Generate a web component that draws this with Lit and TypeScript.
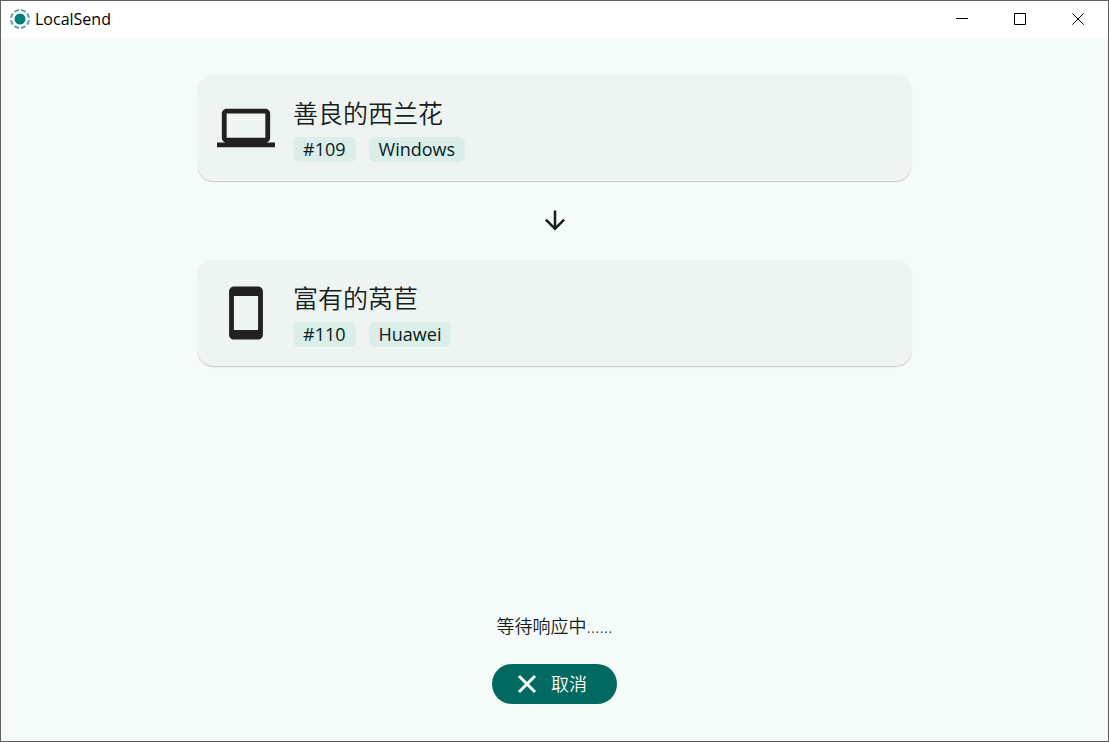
import { LitElement, html, css, svg } from "lit";
import { customElement, property } from "lit/decorators.js";

type DeviceKind = "desktop" | "mobile";

const deviceIcons = {
  desktop: svg`<path d="M20 18c1.1 0 1.99-.9 1.99-2L22 6c0-1.1-.9-2-2-2H4c-1.1 0-2 .9-2 2v10c0 1.1.9 2 2 2H0v2h24v-2h-4zM4 6h16v10H4V6z"/>`,
  mobile: svg`<path d="M17 1.01 7 1c-1.1 0-2 .9-2 2v18c0 1.1.9 2 2 2h10c1.1 0 2-.9 2-2V3c0-1.1-.9-1.99-2-1.99zM17 19H7V5h10v14z"/>`,
};

@customElement("title-bar")
export class TitleBar extends LitElement {
  static styles = css`
    :host {
      display: flex;
      align-items: center;
      justify-content: space-between;
      box-sizing: border-box;
      height: 37px;
      padding: 0 1px 2px 0;
      background: #fff;
      color: #000;
    }
    .brand {
      display: flex;
      align-items: center;
      gap: 5px;
      padding-left: 9px;
      font-size: 16px;
      line-height: 20px;
    }
    .brand svg {
      width: 20px;
      height: 20px;
    }
    .controls {
      display: flex;
      height: 100%;
    }
    button {
      display: grid;
      place-items: center;
      width: 58px;
      height: 100%;
      padding: 0;
      border: 0;
      background: none;
      color: inherit;
    }
    button svg {
      width: 12px;
      height: 12px;
      fill: none;
      stroke: currentColor;
    }
  `;

  render() {
    return html`
      <div class="brand">
        <svg viewBox="0 0 20 20" fill="none" stroke="#5fa5a1" stroke-width="2" aria-hidden="true">
          <circle cx="10" cy="10" r="5.5" fill="#008078" stroke="none" />
          <circle cx="10" cy="10" r="9" pathLength="80" stroke-dasharray="7 3" stroke-dashoffset="-1.5" />
        </svg>
        <span>LocalSend</span>
      </div>
      <div class="controls">
        <button aria-label="最小化">
          <svg viewBox="0 0 12 12"><path d="M0 5.5h12" /></svg>
        </button>
        <button aria-label="最大化">
          <svg viewBox="0 0 12 12"><path d="M.5.5h11v11H.5z" /></svg>
        </button>
        <button aria-label="关闭">
          <svg viewBox="0 0 12 12"><path d="m.3.3 11.4 11.4M11.7.3.3 11.7" /></svg>
        </button>
      </div>
    `;
  }
}

@customElement("device-card")
export class DeviceCard extends LitElement {
  @property() name = "";
  @property() kind: DeviceKind = "desktop";
  @property({ attribute: false }) tags: string[] = [];

  static styles = css`
    :host {
      display: flex;
      align-items: center;
      gap: 18px;
      padding: 19px;
      border-radius: 15px;
      background: #eef4f2;
      box-shadow: 0 1px 1px rgba(0, 0, 0, 0.14), 0 1px 2px rgba(0, 0, 0, 0.08);
    }
    .icon {
      flex: none;
      width: 58px;
      height: 58px;
      fill: #212121;
    }
    .info {
      display: flex;
      flex-direction: column;
      gap: 5px;
      min-width: 0;
    }
    h2 {
      margin: 0;
      font-size: 25px;
      font-weight: 350;
      line-height: 38px;
    }
    ul {
      display: flex;
      flex-wrap: wrap;
      gap: 13px;
      margin: 0;
      padding: 0;
      list-style: none;
    }
    li {
      padding: 0 10px;
      border-radius: 6px;
      background: #dbeee9;
      color: #06201c;
      font-size: 18px;
      line-height: 25px;
    }
  `;

  render() {
    return html`
      <svg class="icon" viewBox="0 0 24 24" aria-hidden="true">${deviceIcons[this.kind]}</svg>
      <div class="info">
        <h2>${this.name}</h2>
        <ul>
          ${this.tags.map((tag) => html`<li>${tag}</li>`)}
        </ul>
      </div>
    `;
  }
}

@customElement("app-root")
export class AppRoot extends LitElement {
  static styles = css`
    :host {
      display: flex;
      flex-direction: column;
      box-sizing: border-box;
      min-height: 100vh;
      border: 1px solid #5f5f5f;
      background: #f5fbf9;
      color: #171d1b;
      font-family: "Open Sans", "Noto Sans CJK SC", sans-serif;
    }
    main {
      flex: 1;
      display: flex;
      flex-direction: column;
      justify-content: space-between;
      box-sizing: border-box;
      width: 100%;
      max-width: 787px;
      margin: 0 auto;
      padding: 37px;
    }
    .devices {
      display: flex;
      flex-direction: column;
      gap: 24px;
    }
    .arrow {
      align-self: center;
      width: 30px;
      height: 31px;
      fill: currentColor;
    }
    .status {
      display: flex;
      flex-direction: column;
      align-items: center;
      gap: 25px;
    }
    p {
      margin: 0;
      font-size: 18px;
      font-weight: 350;
      line-height: 26px;
    }
    .cancel {
      display: flex;
      align-items: center;
      gap: 13px;
      height: 40px;
      padding: 0 30px 0 24px;
      border: 0;
      border-radius: 20px;
      background: #006a60;
      color: #fff;
      font: inherit;
      font-size: 18px;
      font-weight: 350;
    }
    .cancel svg {
      width: 22px;
      height: 22px;
      fill: none;
      stroke: currentColor;
      stroke-width: 3;
    }
    .cancel span {
      padding-bottom: 2px;
    }
  `;

  render() {
    return html`
      <title-bar></title-bar>
      <main>
        <section class="devices">
          <device-card name="善良的西兰花" kind="desktop" .tags=${["#109", "Windows"]}></device-card>
          <svg class="arrow" viewBox="0 0 24 24" aria-hidden="true">
            <path d="m20 12-1.41-1.41L13 16.17V4h-2v12.17l-5.58-5.59L4 12l8 8 8-8z" />
          </svg>
          <device-card name="富有的莴苣" kind="mobile" .tags=${["#110", "Huawei"]}></device-card>
        </section>
        <section class="status">
          <p>等待响应中……</p>
          <button class="cancel">
            <svg viewBox="0 0 22 22" aria-hidden="true"><path d="m3 3 16 16M19 3 3 19" /></svg>
            <span>取消</span>
          </button>
        </section>
      </main>
    `;
  }
}
